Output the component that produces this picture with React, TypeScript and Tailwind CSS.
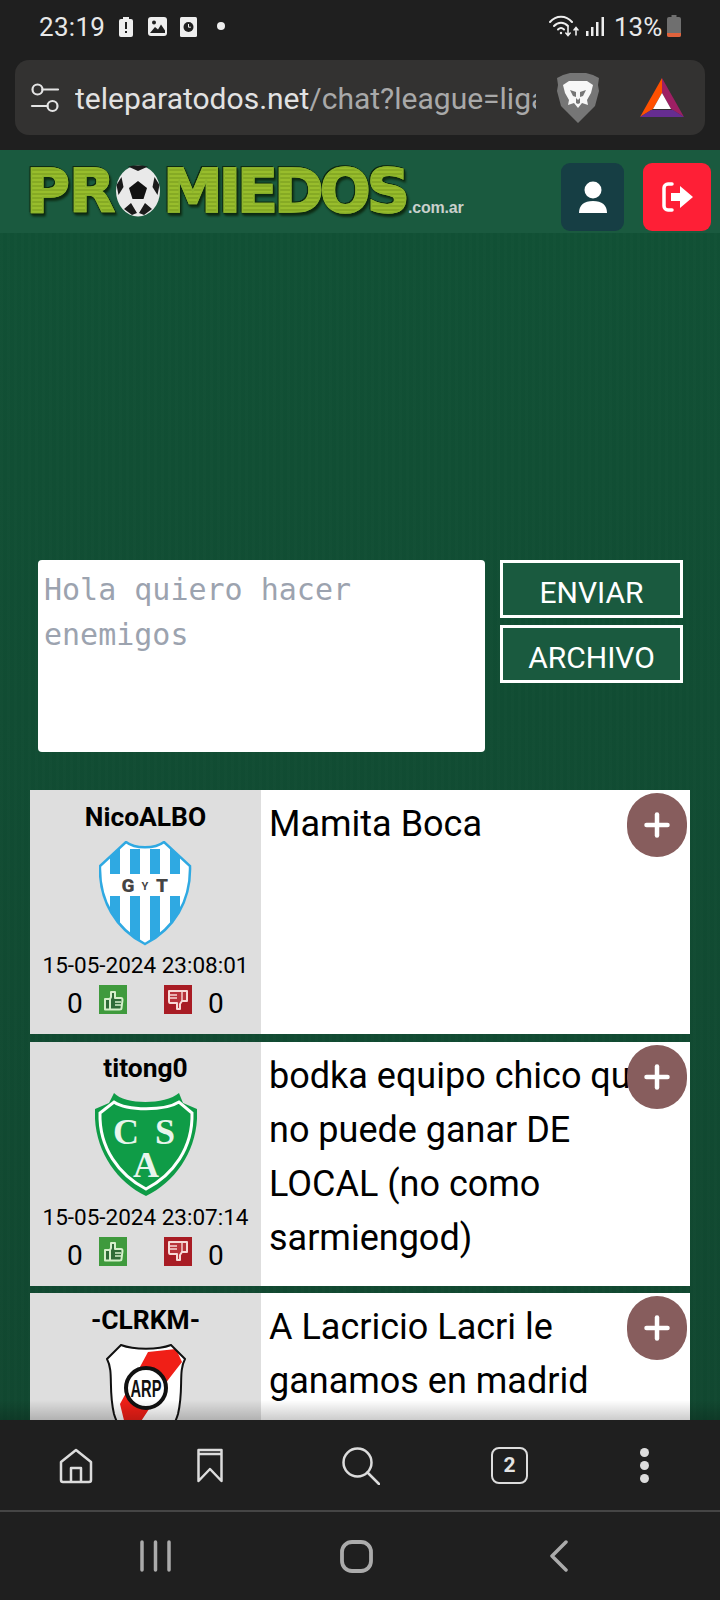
import React from "react";
import { Plus } from "lucide-react";

const texture =
  "bg-[repeating-linear-gradient(90deg,rgba(255,255,255,0.006)_0px,rgba(255,255,255,0.006)_3px,rgba(0,0,0,0.008)_3px,rgba(0,0,0,0.008)_7px),linear-gradient(180deg,#115135_0%,#114d33_40%,#114830_100%)]";

function StatusBar() {
  return (
    <div className="h-[60px] flex items-start pt-[10px] text-[#e8e8e8] relative">
      <span className="ml-[39px] w-[65px] text-[26px] leading-[34px] font-['Roboto',sans-serif] tracking-[0.3px]">
        23:19
      </span>
      {/* notification icons */}
      <svg width="14" height="20" viewBox="0 0 14 20" className="ml-[15px] mt-[7px]">
        <path d="M4 0h6v2h2a2 2 0 0 1 2 2v14a2 2 0 0 1-2 2H2a2 2 0 0 1-2-2V4a2 2 0 0 1 2-2h2z" fill="#eee" />
        <rect x="6" y="5" width="2" height="7" fill="#1f1f1f" />
        <rect x="6" y="14" width="2" height="2" fill="#1f1f1f" />
      </svg>
      <svg width="19" height="19" viewBox="0 0 19 19" className="ml-[15px] mt-[7px]">
        <rect width="19" height="19" rx="3" fill="#eee" />
        <circle cx="6" cy="5.5" r="2" fill="#1f1f1f" />
        <path d="M2 16l5-6 3 2.5 3-5 4 6v2.5z" fill="#1f1f1f" />
      </svg>
      <svg width="17" height="20" viewBox="0 0 17 20" className="ml-[13px] mt-[7px]">
        <rect width="17" height="20" rx="1.5" fill="#eee" />
        <circle cx="8.5" cy="10" r="5" fill="#1f1f1f" />
        <path d="M8.5 7v3.2h2.4" stroke="#eee" strokeWidth="1" fill="none" />
      </svg>
      <span className="ml-[20px] mt-[12px] w-[8px] h-[8px] rounded-full bg-[#eee]" />

      {/* right side */}
      <div className="ml-auto mr-[39px] flex items-start">
        <svg width="32" height="24" viewBox="0 0 32 24" className="mt-[4px]" fill="none" stroke="#eee" strokeLinecap="round">
          <path d="M1 8C7 1 17 1 23 8" strokeWidth="2" />
          <path d="M5 12c4-4.500 10-4.500 14 0" strokeWidth="2" />
          <path d="M9 15.500c2-2 4-2 6 0" strokeWidth="2" />
          <circle cx="12" cy="19" r="1.200" fill="#eee" stroke="none" />
          <path d="M19 13v8M16.800 19l2.200 2.500 2.200-2.500M27 21v-7M25 16l2-2.500 2 2.500" strokeWidth="1.600" />
        </svg>
        <svg width="19" height="19" viewBox="0 0 19 19" className="ml-[5px] mt-[7px]" fill="#eee">
          <rect x="0" y="14" width="2.500" height="5" />
          <rect x="5" y="10" width="2.500" height="9" />
          <rect x="10" y="5" width="2.500" height="14" />
          <rect x="15.500" y="0" width="2.500" height="19" />
        </svg>
        <span className="ml-[9px] w-[48px] text-[26px] leading-[34px] font-['Roboto',sans-serif]">13%</span>
        <svg width="14" height="22" viewBox="0 0 14 22" className="ml-[5px] mt-[5px]">
          <path d="M4.500 0h5v2H12a2 2 0 0 1 2 2v16a2 2 0 0 1-2 2H2a2 2 0 0 1-2-2V4a2 2 0 0 1 2-2h2.500z" fill="#6f6f6f" />
          <path d="M0 18h14v2a2 2 0 0 1-2 2H2a2 2 0 0 1-2-2z" fill="#e0623c" />
        </svg>
      </div>
    </div>
  );
}

function UrlBar() {
  return (
    <div className="h-[75px] mx-[15px] mb-[15px] rounded-[14px] bg-[#333231] flex items-center">
      <svg width="30" height="32" viewBox="0 0 30 32" className="ml-[15px]" fill="none" stroke="#e4e4e4" strokeWidth="2.200">
        <circle cx="7.500" cy="7.500" r="5" />
        <path d="M12.500 7.500H28" strokeLinecap="round" />
        <circle cx="22.500" cy="24" r="5" />
        <path d="M2 24h15.500" strokeLinecap="round" />
      </svg>
      <div className="ml-[15px] w-[461px] overflow-hidden whitespace-nowrap pt-[2px] text-[30px] leading-[40px] font-['Roboto',sans-serif] text-[#a9a9a9]">
        <span className="text-[#e2e2e2]">teleparatodos.net</span>/chat?league=liga
      </div>
      {/* brave lion */}
      <svg width="44" height="50" viewBox="0 0 44 50" className="ml-[20px]">
        <path d="M7 2l7-2h16l7 2 6 3-1 7 1 6-4 15-6 6-11 11-11-11-6-6L1 18l1-6-1-7z" fill="#767676" />
        <path d="M7 12l6-4h18l6 4-2 8-4 7 1 5-6-2-4 5-4-5-6 2 1-5-4-7z" fill="#f7f7f7" />
        <path d="M14 17l6 2v6l2 2 2-2v-6l6-2-3 6-3 1v6l-2 1-2-1v-6l-3-1z" fill="#767676" />
      </svg>
      {/* bat triangle */}
      <svg width="44" height="40" viewBox="0 0 44 40" className="ml-[40px]">
        <path d="M22 0L0 39l13-8 9-16z" fill="#ff5000" />
        <path d="M22 0l22 39-13-8-9-16z" fill="#9e1f63" />
        <path d="M0 39l11-7h22l11 7z" fill="#662d91" />
        <path d="M22 15l-9 16h18z" fill="#fff" />
      </svg>
    </div>
  );
}

function Logo() {
  const letters =
    "font-['DejaVu_Sans',sans-serif] font-bold text-[60px] leading-[60px] text-transparent bg-clip-text bg-[repeating-linear-gradient(0deg,#98bd2c_0px,#98bd2c_2px,#86aa24_2px,#86aa24_4px)] [-webkit-text-stroke:1.5px_#8db52c] [filter:drop-shadow(1px_1px_0_#0d2a12)_drop-shadow(-1px_-1px_0_#0d2a12)_drop-shadow(1px_2px_1px_#0d2a12)]";
  return (
    <div className="ml-[26px] mt-[11px] flex items-center relative">
      <span className={letters + " w-[90px] tracking-[-1px]"}>PR</span>
      <svg width="44" height="52" viewBox="0 0 44 52" className="shrink-0">
        <ellipse cx="22" cy="26" rx="22" ry="25.500" fill="#e9e9e9" />
        <path d="M22 16l9 7-3.500 11h-11L13 23z" fill="#111" />
        <path d="M12 1.500C16 0 28 0 32 1.500L22 6zM0.500 20l5-8 2 10-5 8zM43.500 20l-5-8-2 10 5 8zM8 44l7-6 6 10-5 2zM36 44l-7-6-6 10 5 2z" fill="#1a1a1a" />
      </svg>
      <span className={letters + " ml-[3px] w-[244px] tracking-[-4px]"}>MIEDOS</span>
      <span className="ml-[1px] mt-[33px] w-[62px] text-[16px] leading-[18px] font-bold text-[#c9d0cc] font-['Liberation_Sans',sans-serif] tracking-[-0.2px]">
        .com.ar
      </span>
    </div>
  );
}

function Header() {
  return (
    <div className="h-[83px] shrink-0 bg-[#1a5a3f] flex items-start">
      <Logo />
      <div className="ml-auto mr-[9px] mt-[13px] flex items-center gap-[19px]">
        <div className="w-[63px] h-[68px] rounded-[9px] bg-[#163e44] flex items-center justify-center">
          <svg width="28" height="32" viewBox="0 0 28 32" fill="#fff">
            <circle cx="14" cy="9" r="8.500" />
            <path d="M0 32c0-8 5-12 14-12s14 4 14 12z" />
          </svg>
        </div>
        <div className="w-[68px] h-[68px] rounded-[9px] bg-[#fe1f36] flex items-center justify-center">
          <svg width="31" height="30" viewBox="0 0 31 30">
            <path d="M10 2H6a4 4 0 0 0-4 4v18a4 4 0 0 0 4 4h4" fill="none" stroke="#fff" strokeWidth="3.500" strokeLinecap="round" />
            <path d="M9 11h9V4l13 11-13 11v-7H9z" fill="#fff" />
          </svg>
        </div>
      </div>
    </div>
  );
}

function ChatForm() {
  return (
    <div className="flex items-start pl-[38px]">
      <textarea
        readOnly
        placeholder="Hola quiero hacer enemigos"
        className="w-[447px] h-[192px] bg-white rounded-[4px] px-[6px] pt-[7px] pb-[5px] resize-none outline-none text-[30px] leading-[45px] font-['DejaVu_Sans_Mono',monospace] placeholder:text-[#9ca3af]"
      />
      <div className="ml-[15px] flex flex-col gap-[7px] w-[183px]">
        <button className="h-[58px] pt-[8px] border-[3px] border-white bg-[#1a5a3f] text-white text-[30px] leading-[40px] font-['Roboto',sans-serif]">
          ENVIAR
        </button>
        <button className="h-[58px] pt-[8px] border-[3px] border-white bg-[#1a5a3f] text-white text-[30px] leading-[40px] font-['Roboto',sans-serif]">
          ARCHIVO
        </button>
      </div>
    </div>
  );
}

function GytCrest() {
  const shield = "M27 1C36 8 56 8 65 1L91 25C92 60 75 88 46 103C17 88 0 60 1 25Z";
  return (
    <svg width="93" height="105" viewBox="0 0 93 105">
      <defs>
        <clipPath id="gyt-clip">
          <path d={shield} />
        </clipPath>
      </defs>
      <path d={shield} fill="#fff" />
      <g clipPath="url(#gyt-clip)" fill="#2fa9e2">
        <rect x="11" y="8" width="10" height="25" />
        <rect x="31" y="8" width="10" height="25" />
        <rect x="51" y="8" width="10" height="25" />
        <rect x="71" y="8" width="10" height="25" />
        <rect x="11" y="55" width="10" height="48" />
        <rect x="31" y="55" width="10" height="48" />
        <rect x="51" y="55" width="10" height="48" />
        <rect x="71" y="55" width="10" height="48" />
      </g>
      <path d={shield} fill="none" stroke="#2fa9e2" strokeWidth="2.500" />
      <text x="29" y="51" textAnchor="middle" fontFamily="Roboto, sans-serif" fontWeight="900" fontSize="19" fill="#444">G</text>
      <text x="46" y="49" textAnchor="middle" fontFamily="Roboto, sans-serif" fontWeight="700" fontSize="11" fill="#444">Y</text>
      <text x="63" y="51" textAnchor="middle" fontFamily="Roboto, sans-serif" fontWeight="900" fontSize="19" fill="#444">T</text>
    </svg>
  );
}

function CsaCrest() {
  return (
    <svg width="102" height="103" viewBox="0 0 102 103">
      <path d="M19 0C30 12 70 12 84 0L88 10L102 16C104 55 82 88 51 103C20 88-2 55 0 16L14 10Z" fill="#0f9c47" />
      <path d="M19 9C32 18 70 18 84 9L97 20C98 55 78 82 51 96C24 82 4 55 5 20Z" fill="none" stroke="#fff" strokeWidth="3" />
      <text x="31" y="51" textAnchor="middle" fontFamily="'Liberation Serif', serif" fontWeight="700" fontSize="36" fill="#e8f5ec">C</text>
      <text x="70" y="51" textAnchor="middle" fontFamily="'Liberation Serif', serif" fontWeight="700" fontSize="36" fill="#e8f5ec">S</text>
      <text x="51" y="84" textAnchor="middle" fontFamily="'Liberation Serif', serif" fontWeight="700" fontSize="36" fill="#e8f5ec">A</text>
    </svg>
  );
}

function CarpCrest() {
  const shield = "M15 1C28 6 52 6 65 1L79 15C72 28 78 45 72 70C66 90 52 100 40 105C28 100 14 90 8 70C2 45 8 28 1 15Z";
  return (
    <svg width="80" height="106" viewBox="0 0 80 106">
      <defs>
        <clipPath id="carp-clip">
          <path d={shield} />
        </clipPath>
      </defs>
      <path d={shield} fill="#fff" />
      <g clipPath="url(#carp-clip)">
        <path d="M42 8L70 5L76 18L62 36L30 85L44 110L25 105L14 60z" fill="#f01f17" />
      </g>
      <path d={shield} fill="none" stroke="#111" strokeWidth="2" />
      <circle cx="40" cy="44" r="20" fill="#fff" stroke="#111" strokeWidth="4" />
      <text x="40" y="53" textAnchor="middle" fontFamily="'Liberation Sans', sans-serif" fontWeight="700" fontSize="24" textLength="31" lengthAdjust="spacingAndGlyphs" fill="#111">ARP</text>
    </svg>
  );
}

function ThumbUp() {
  return (
    <div className="w-[28px] h-[29px] bg-[#3f9a3d] flex items-center justify-center">
      <svg width="22" height="22" viewBox="0 0 22 22" fill="#2f6b38" stroke="#d5efca" strokeWidth="2" strokeLinejoin="round">
        <path d="M3 10h5l1-2V3h4v6h6c1 0 1.500 1 1.500 2l-1 8c0 1-1 1.500-2 1.500H3z" />
        <path d="M8 10v10" fill="none" />
        <path d="M13 13h6M13 16h6" fill="none" strokeWidth="1.400" />
      </svg>
    </div>
  );
}

function ThumbDown() {
  return (
    <div className="w-[28px] h-[29px] bg-[#a81c24] flex items-center justify-center">
      <svg width="22" height="22" viewBox="0 0 22 22" fill="#b8333a" stroke="#f7d9d6" strokeWidth="2" strokeLinejoin="round">
        <path d="M2 2h18v10h-5l-2 3v5H10v-6H3c-1 0-1-1-1-2z" />
        <path d="M15 2v10M3 6h7M3 9h7" fill="none" strokeWidth="1.400" />
      </svg>
    </div>
  );
}

type Msg = { name: string; date?: string; crest: React.ReactNode; text: string };

const messages: Msg[] = [
  { name: "NicoALBO", date: "15-05-2024 23:08:01", crest: <GytCrest />, text: "Mamita Boca" },
  {
    name: "titong0",
    date: "15-05-2024 23:07:14",
    crest: <CsaCrest />,
    text: "bodka equipo chico que no puede ganar DE LOCAL (no como sarmiengod)",
  },
  // the rest of this card is hidden behind the browser bar
  { name: "-CLRKM-", crest: <CarpCrest />, text: "A Lacricio Lacri le ganamos en madrid" },
];

function MessageCard({ msg }: { msg: Msg }) {
  return (
    <div className="relative h-[244px] flex bg-white font-['Roboto',sans-serif] text-black">
      <div className="w-[231px] shrink-0 bg-[#dedede] flex flex-col items-center">
        <div className="h-[51px] pt-[4px] flex items-center justify-center text-[26.400px] font-bold">{msg.name}</div>
        <div className="h-[105px] flex items-start justify-center">{msg.crest}</div>
        {msg.date && (
          <>
            <div className="h-[39px] pt-[1px] flex items-center justify-center text-[22.500px] whitespace-nowrap">
              {msg.date}
            </div>
            <div className="w-full flex items-start text-[28px] leading-[29px]">
              <span className="ml-[37px] mt-[4px] w-[16px]">0</span>
              <span className="ml-[16px]">
                <ThumbUp />
              </span>
              <span className="ml-[37px]">
                <ThumbDown />
              </span>
              <span className="ml-[16px] mt-[4px] w-[16px]">0</span>
            </div>
          </>
        )}
      </div>
      <div className="flex-1 pl-[8px] pr-[20px] pt-[7px] text-[36px] leading-[54px]">{msg.text}</div>
      <div className="absolute right-[3px] top-[3px] w-[60px] h-[64px] rounded-full bg-[#875d5d] flex items-center justify-center">
        <Plus size={36} color="#fff" strokeWidth={3} />
      </div>
    </div>
  );
}

function BrowserNav() {
  return (
    <div className="h-[90px] shrink-0 bg-[#1f1f1f] flex items-center pt-[1px]">
      <svg width="34" height="36" viewBox="0 0 34 36" className="ml-[59px]" fill="none" stroke="#dcdcdc" strokeWidth="2.500" strokeLinejoin="round">
        <path d="M2 14L17 2l15 12v18a2 2 0 0 1-2 2H4a2 2 0 0 1-2-2z" />
        <path d="M12 34V20h10v14" />
      </svg>
      <svg width="26" height="35" viewBox="0 0 26 35" className="ml-[104px]" fill="none" stroke="#dcdcdc" strokeWidth="2.500" strokeLinejoin="round">
        <path d="M1.500 2h23v31L13 21 1.500 33zM1.500 6h23" />
      </svg>
      <svg width="38" height="38" viewBox="0 0 38 38" className="ml-[119px]" fill="none" stroke="#dcdcdc" strokeWidth="2.500" strokeLinecap="round">
        <circle cx="15.500" cy="15.500" r="14" />
        <path d="M25.500 25.500L37 37" />
      </svg>
      <div className="ml-[111px] w-[37px] h-[37px] rounded-[8px] border-[2.500px] border-[#dcdcdc] flex items-center justify-center text-[#e4e4e4] text-[21px] font-bold font-['Roboto',sans-serif]">
        2
      </div>
      <div className="ml-[112px] flex flex-col gap-[4px]">
        <span className="w-[9px] h-[9px] rounded-full bg-[#dcdcdc]" />
        <span className="w-[9px] h-[9px] rounded-full bg-[#dcdcdc]" />
        <span className="w-[9px] h-[9px] rounded-full bg-[#dcdcdc]" />
      </div>
    </div>
  );
}

function SystemNav() {
  return (
    <div className="h-[90px] shrink-0 bg-[#1f1f1f] border-t-[2px] border-[#454545] flex items-center">
      <svg width="31" height="32" viewBox="0 0 31 32" className="ml-[140px]" stroke="#ababab" strokeWidth="3.500" strokeLinecap="round">
        <path d="M2 2v28M15.500 2v28M29 2v28" />
      </svg>
      <svg width="33" height="33" viewBox="0 0 33 33" className="ml-[169px]" fill="none" stroke="#ababab" strokeWidth="3.800">
        <rect x="2" y="2" width="29" height="29" rx="10" />
      </svg>
      <svg width="20" height="32" viewBox="0 0 20 32" className="ml-[176px]" fill="none" stroke="#ababab" strokeWidth="3.500" strokeLinecap="round" strokeLinejoin="round">
        <path d="M17 2L3 16l14 14" />
      </svg>
    </div>
  );
}

export default function App() {
  return (
    <div className="w-[720px] h-[1600px] overflow-hidden flex flex-col bg-[#1f1f1f]">
      <StatusBar />
      <UrlBar />
      <Header />
      <div className={"relative flex-1 overflow-hidden pt-[327px] " + texture}>
        <ChatForm />
        <div className="mt-[38px] mx-[30px] flex flex-col gap-[7.500px]">
          {messages.map((m) => (
            <MessageCard key={m.name} msg={m} />
          ))}
        </div>
        <div className="absolute left-0 right-0 bottom-0 h-[20px] bg-gradient-to-t from-black/20 to-transparent" />
      </div>
      <BrowserNav />
      <SystemNav />
    </div>
  );
}
